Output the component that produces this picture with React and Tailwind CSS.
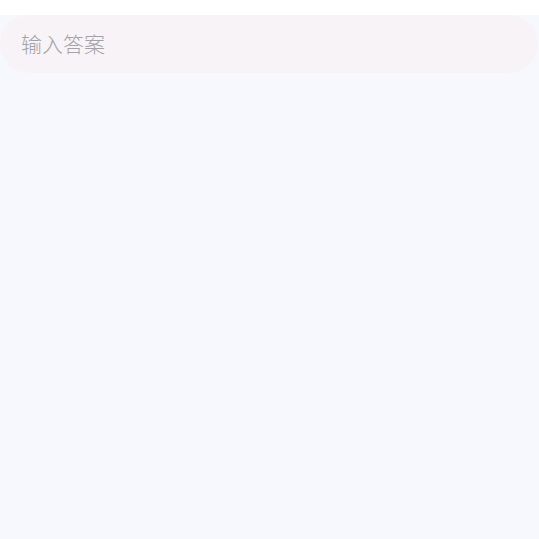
export default function App() {
  return (
    <div className="w-[539px] h-[539px] bg-white flex flex-col">
      <div className="h-[15px] bg-white shrink-0" />
      <div className="flex-1 bg-[#f7f7fe]">
        <div className="h-[58px] w-[538px] rounded-full bg-[#f8f3f7] flex items-center pl-[21px]">
          <input
            placeholder="输入答案"
            className="w-full bg-transparent outline-none text-[21px] font-light text-[#9a9a9a] placeholder:text-[#a3a3a6]"
            style={{ fontFamily: '"Noto Sans CJK SC", "Noto Sans", sans-serif' }}
          />
        </div>
      </div>
    </div>
  );
}
